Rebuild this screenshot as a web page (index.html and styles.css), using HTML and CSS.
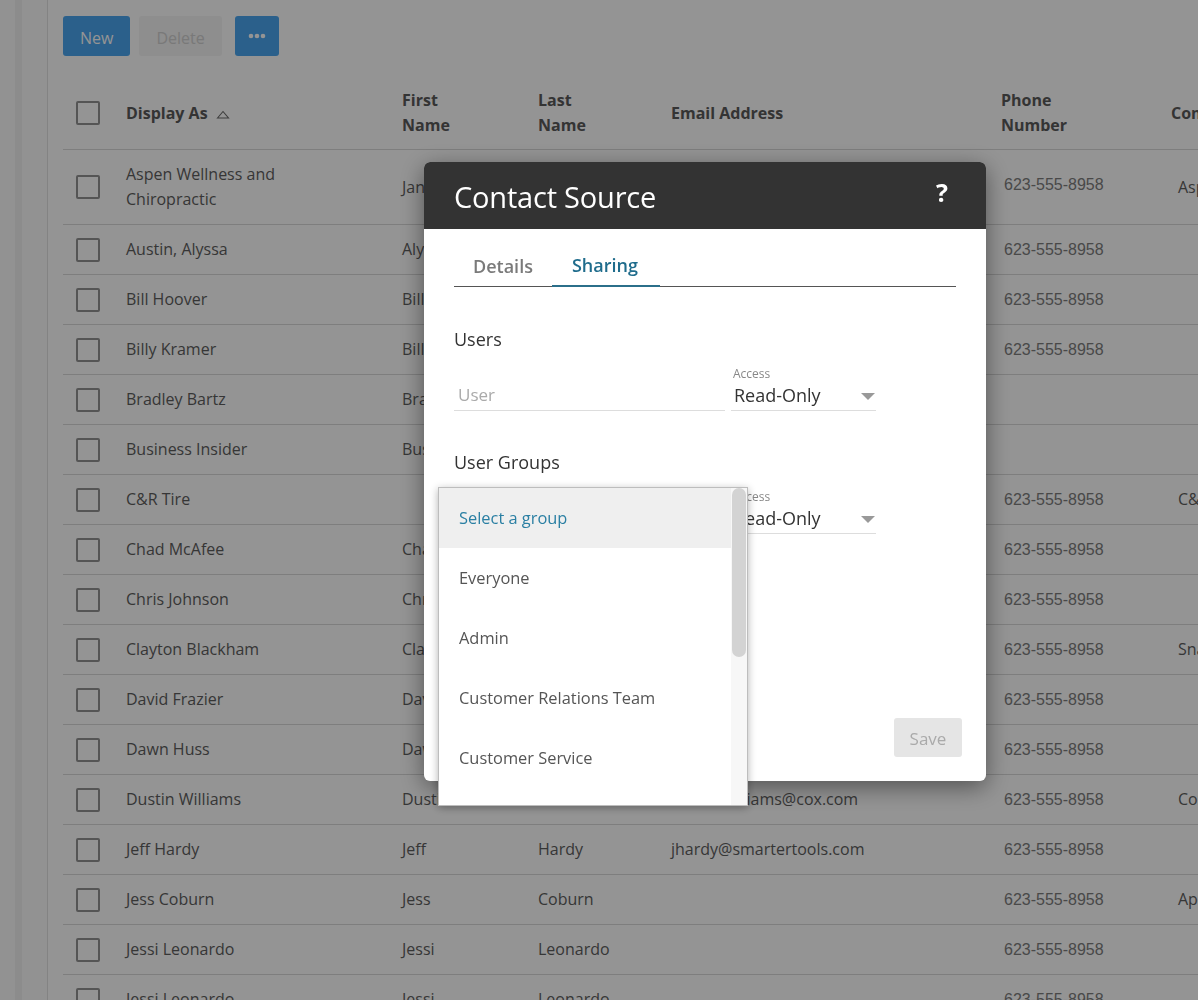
FILE: index.html
```html
<!DOCTYPE html>
<html>
<head>
<meta charset="utf-8">
<link rel="stylesheet" href="styles.css">
</head>
<body>
<div class="app">
  <aside class="sidebar"><div class="rail"></div></aside>
  <main class="main">
    <div class="toolbar">
      <button class="btn btn-primary">New</button>
      <button class="btn btn-disabled">Delete</button>
      <button class="btn btn-primary btn-more"><svg width="18" height="6" viewBox="0 0 18 6"><circle cx="3" cy="3" r="2.3" fill="#fff"/><circle cx="9" cy="3" r="2.3" fill="#fff"/><circle cx="15" cy="3" r="2.3" fill="#fff"/></svg></button>
    </div>
    <table class="grid">
      <colgroup>
        <col class="c-check"><col class="c-name"><col class="c-first"><col class="c-last"><col class="c-email"><col class="c-phone"><col class="c-company">
      </colgroup>
      <thead>
        <tr>
          <th><span class="cb"></span></th>
          <th class="name-cell">Display As <svg class="sort" width="14" height="9" viewBox="0 0 14 9"><path d="M1.5 8 L7 1.5 L12.5 8 Z" fill="none" stroke="#6a6a6a" stroke-width="1.1"/></svg></th>
          <th>First<br>Name</th>
          <th>Last<br>Name</th>
          <th>Email Address</th>
          <th>Phone<br>Number</th>
          <th>Company</th>
        </tr>
      </thead>
      <tbody>
        <tr><td><span class="cb"></span></td><td class="name-cell">Aspen Wellness and Chiropractic</td><td>Janet</td><td>Smith</td><td></td><td class="phone top">623-555-8958</td><td class="company">Aspen</td></tr>
        <tr><td><span class="cb"></span></td><td class="name-cell">Austin, Alyssa</td><td>Alyssa</td><td>Austin</td><td></td><td class="phone">623-555-8958</td><td></td></tr>
        <tr><td><span class="cb"></span></td><td class="name-cell">Bill Hoover</td><td>Bill</td><td>Hoover</td><td></td><td class="phone">623-555-8958</td><td></td></tr>
        <tr><td><span class="cb"></span></td><td class="name-cell">Billy Kramer</td><td>Billy</td><td>Kramer</td><td></td><td class="phone">623-555-8958</td><td></td></tr>
        <tr><td><span class="cb"></span></td><td class="name-cell">Bradley Bartz</td><td>Bradley</td><td>Bartz</td><td></td><td class="phone"></td><td></td></tr>
        <tr><td><span class="cb"></span></td><td class="name-cell">Business Insider</td><td>Business</td><td>Insider</td><td></td><td class="phone"></td><td></td></tr>
        <tr><td><span class="cb"></span></td><td class="name-cell">C&amp;R Tire</td><td></td><td></td><td></td><td class="phone">623-555-8958</td><td class="company">C&amp;R Tire</td></tr>
        <tr><td><span class="cb"></span></td><td class="name-cell">Chad McAfee</td><td>Chad</td><td>McAfee</td><td></td><td class="phone">623-555-8958</td><td></td></tr>
        <tr><td><span class="cb"></span></td><td class="name-cell">Chris Johnson</td><td>Chris</td><td>Johnson</td><td></td><td class="phone">623-555-8958</td><td></td></tr>
        <tr><td><span class="cb"></span></td><td class="name-cell">Clayton Blackham</td><td>Clayton</td><td>Blackham</td><td></td><td class="phone">623-555-8958</td><td class="company">Snap-on</td></tr>
        <tr><td><span class="cb"></span></td><td class="name-cell">David Frazier</td><td>David</td><td>Frazier</td><td></td><td class="phone">623-555-8958</td><td></td></tr>
        <tr><td><span class="cb"></span></td><td class="name-cell">Dawn Huss</td><td>Dawn</td><td>Huss</td><td></td><td class="phone">623-555-8958</td><td></td></tr>
        <tr><td><span class="cb"></span></td><td class="name-cell">Dustin Williams</td><td>Dustin</td><td>Williams</td><td>dustin.williams@cox.com</td><td class="phone">623-555-8958</td><td class="company">Cox</td></tr>
        <tr><td><span class="cb"></span></td><td class="name-cell">Jeff Hardy</td><td>Jeff</td><td>Hardy</td><td>jhardy@smartertools.com</td><td class="phone">623-555-8958</td><td></td></tr>
        <tr><td><span class="cb"></span></td><td class="name-cell">Jess Coburn</td><td>Jess</td><td>Coburn</td><td></td><td class="phone">623-555-8958</td><td class="company">Apple</td></tr>
        <tr><td><span class="cb"></span></td><td class="name-cell">Jessi Leonardo</td><td>Jessi</td><td>Leonardo</td><td></td><td class="phone">623-555-8958</td><td></td></tr>
        <tr><td><span class="cb"></span></td><td class="name-cell">Jessi Leonardo</td><td>Jessi</td><td>Leonardo</td><td></td><td class="phone">623-555-8958</td><td></td></tr>
      </tbody>
    </table>
  </main>
</div>

<div class="overlay"></div>

<div class="modal">
  <div class="modal-header">
    <h1 class="modal-title">Contact Source</h1>
    <span class="help">?</span>
  </div>
  <div class="modal-body">
    <div class="tabs">
      <div class="tab">Details</div>
      <div class="tab active">Sharing</div>
    </div>
    <h2 class="section-title">Users</h2>
    <div class="field-row">
      <div class="field field-main">
        <div class="field-value placeholder">User</div>
      </div>
      <div class="field field-access">
        <div class="field-label">Access</div>
        <div class="field-value">Read-Only<span class="caret"></span></div>
      </div>
    </div>
    <h2 class="section-title section-title-2">User Groups</h2>
    <div class="field-row">
      <div class="field field-main">
        <div class="field-value placeholder"></div>
      </div>
      <div class="field field-access">
        <div class="field-label">Access</div>
        <div class="field-value">Read-Only<span class="caret"></span></div>
      </div>
    </div>
    <div class="modal-footer">
      <button class="save">Save</button>
    </div>
  </div>

  <div class="dropdown">
    <ul class="dd-list">
      <li class="dd-item selected">Select a group</li>
      <li class="dd-item">Everyone</li>
      <li class="dd-item">Admin</li>
      <li class="dd-item">Customer Relations Team</li>
      <li class="dd-item">Customer Service</li>
    </ul>
    <div class="dd-scroll"><div class="dd-thumb"></div></div>
  </div>
</div>
</body>
</html>
```

FILE: styles.css
```css
* { box-sizing: border-box; }
html, body { margin: 0; padding: 0; }
body {
  background: #ffffff;
  font-family: "Open Sans", "Noto Sans", sans-serif;
  color: #5e5e5e;
  overflow: hidden;
  width: 1198px;
  height: 1000px;
}
.app { display: flex; height: 1000px; }
.sidebar {
  width: 48px;
  flex: none;
  background: #fbfbfb;
  border-right: 1px solid #e2e2e2;
  padding-left: 15px;
}
.rail { width: 7px; height: 100%; background: #f1f1f1; }
.main { flex: 1; padding-left: 15px; min-width: 0; }

.toolbar { display: flex; gap: 9px; padding-top: 16px; }
.btn {
  height: 40px;
  border: none;
  border-radius: 3px;
  font-family: "Open Sans", sans-serif;
  font-size: 16px;
  padding: 3px 17px 0;
  color: #ffffff;
}
.btn-primary { background: #4aa6f0; }
.btn-disabled { background: #f4f4f4; color: #d0d0d0; }
.btn-more { margin-left: 4px; width: 44px; padding: 0; display: flex; align-items: center; justify-content: center; }

.grid {
  margin-top: 21px;
  border-collapse: collapse;
  table-layout: fixed;
  width: 1335px;
}
.c-check { width: 63px; }
.c-name { width: 276px; }
.c-first { width: 136px; }
.c-last { width: 133px; }
.c-email { width: 330px; }
.c-phone { width: 170px; }
.c-company { width: 227px; }
.grid th, .grid td {
  padding: 12px 0;
  line-height: 25px;
  text-align: left;
  vertical-align: middle;
  border-bottom: 1px solid #d9d9d9;
  white-space: nowrap;
}
.grid th {
  font-weight: 700;
  font-size: 16px;
  color: #5a5a5a;
}
.grid thead th { padding-top: 11px; padding-bottom: 11px; }
.grid td { font-size: 16px; color: #5e5e5e; }
.grid th:first-child, .grid td:first-child { padding-left: 13px; }
.grid .name-cell { white-space: normal; padding-right: 90px; }
.grid td.phone {
  font-family: "Liberation Sans", Arial, sans-serif;
  color: #7e7e7e;
  padding-left: 3px;
}
.grid td.phone.top { padding-bottom: 18px; }
.grid td.company { overflow: hidden; padding-left: 7px; }
.sort { margin-left: 4px; vertical-align: 0px; }
.cb {
  display: block;
  width: 24px;
  height: 24px;
  border: 2px solid #939393;
  border-radius: 2px;
  background: #ffffff;
}

.overlay {
  position: fixed;
  inset: 0;
  background: rgba(0, 0, 0, 0.42);
}

.modal {
  position: fixed;
  left: 424px;
  top: 162px;
  width: 562px;
  height: 619px;
  background: #ffffff;
  border-radius: 6px;
  box-shadow: 0 6px 24px rgba(0, 0, 0, 0.45);
  display: flex;
  flex-direction: column;
}
.modal-header {
  height: 67px;
  flex: none;
  background: #333333;
  border-radius: 6px 6px 0 0;
  display: flex;
  align-items: center;
  justify-content: space-between;
  padding: 0 38px 0 30px;
}
.modal-title {
  margin: 0;
  font-weight: 400;
  font-size: 29px;
  color: #ffffff;
  letter-spacing: -0.2px;
  margin-top: 2px;
}
.help { color: #ffffff; font-weight: 700; font-size: 25px; margin-top: -7px; }
.modal-body {
  flex: 1;
  display: flex;
  flex-direction: column;
  padding: 16px 30px 24px;
}
.tabs { display: flex; border-bottom: 1px solid #555555; height: 42px; }
.tab {
  padding: 0 19px;
  font-size: 18px;
  font-weight: 600;
  color: #7a7a7a;
  line-height: 42px;
}
.tab.active { color: #1f6c8c; border-bottom: 2px solid #2b6f8a; margin-bottom: -1px; padding: 0 22px 0 20px; line-height: 41px; }
.section-title {
  margin: 40px 0 0;
  font-size: 18px;
  font-weight: 400;
  color: #333333;
  line-height: 24px;
}
.section-title-2 { margin-top: 39px; }
.field-row { display: flex; gap: 6px; margin-top: 15px; }
.field { border-bottom: 1px solid #dddddd; display: flex; flex-direction: column; justify-content: flex-end; padding-bottom: 3px; }
.field-main { width: 271px; }
.field-access { width: 145px; }
.field-label { font-size: 12px; line-height: 16px; color: #888888; padding-left: 2px; }
.field-value {
  font-size: 18px;
  line-height: 24px;
  min-height: 24px;
  color: #333333;
  padding-left: 3px;
  margin-top: 1px;
  display: flex;
  justify-content: space-between;
  align-items: center;
}
.placeholder { color: #aaaaaa; font-size: 17px; padding-left: 4px; }
.caret {
  width: 0; height: 0;
  border-left: 7px solid transparent;
  border-right: 7px solid transparent;
  border-top: 7px solid #999999;
  margin-right: 1px;
  margin-top: 2px;
}
.modal-footer { margin-top: auto; display: flex; justify-content: flex-end; margin-right: -6px; }
.save {
  width: 68px;
  height: 39px;
  border: none;
  border-radius: 3px;
  background: #e5e5e5;
  color: #aaaaaa;
  font-family: "Open Sans", sans-serif;
  font-size: 17px;
  padding-top: 2px;
}

.dropdown {
  position: absolute;
  left: 14px;
  top: 325px;
  width: 310px;
  height: 319px;
  background: #ffffff;
  border: 1px solid #bdbdbd;
  box-shadow: 0 2px 8px rgba(0, 0, 0, 0.3);
  display: flex;
}
.dd-list { list-style: none; margin: 0; padding: 0; flex: 1; }
.dd-item {
  height: 60px;
  line-height: 60px;
  padding-left: 20px;
  font-size: 16.4px;
  color: #555555;
}
.dd-item.selected { background: #efefef; color: #2a7fa3; }
.dd-scroll { width: 16px; background: #f7f7f7; padding: 0 1px; }
.dd-thumb { height: 169px; background: #d3d3d3; border-radius: 7px; }
```
